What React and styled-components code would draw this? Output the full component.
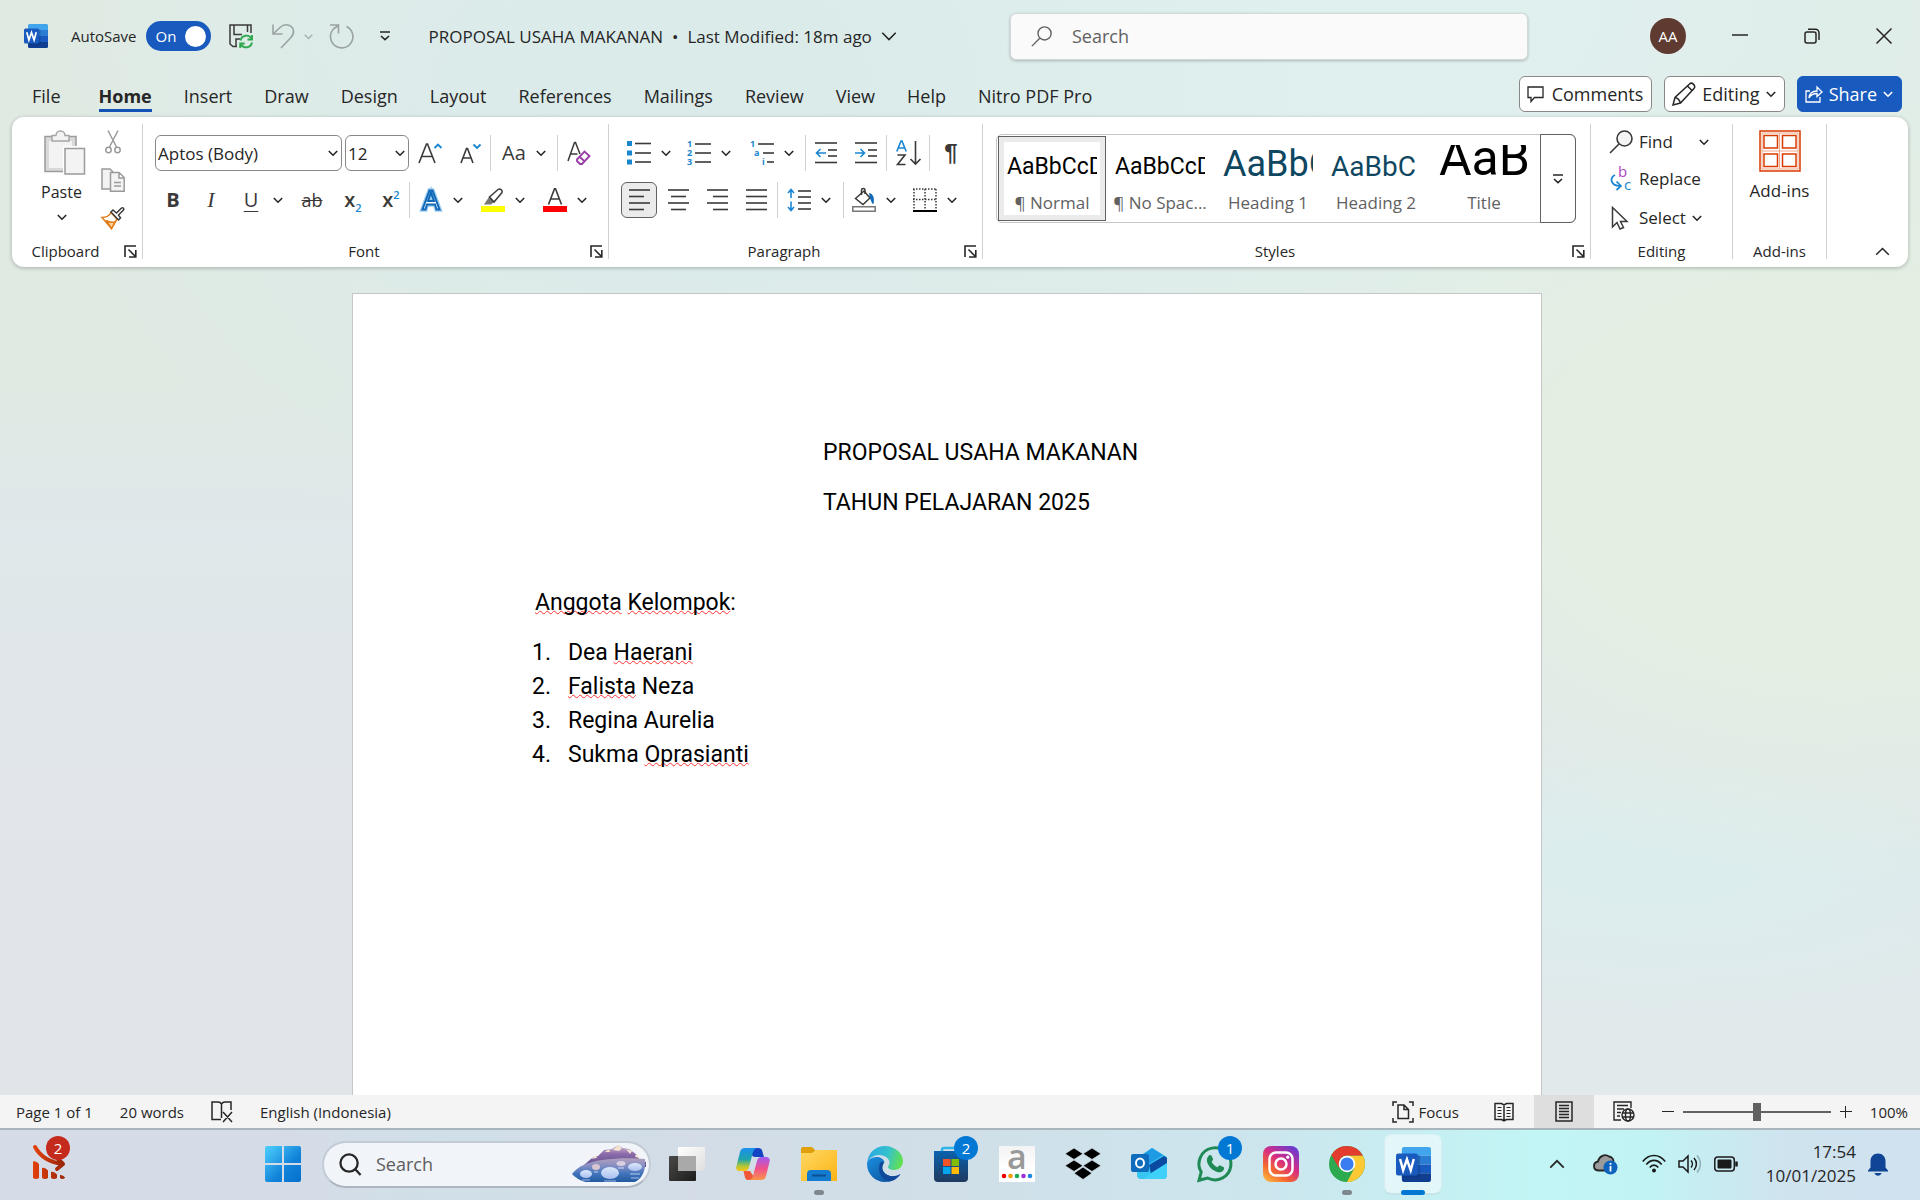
import React from "react";
import styled, { createGlobalStyle, css } from "styled-components";

const ui = '"Open Sans", "Noto Sans", "Liberation Sans", sans-serif';
const body = 'Roboto, "Liberation Sans", sans-serif';
const ink = "#3b3a39";
const blue = "#1a86d0";

const Global = createGlobalStyle`
  *, *::before, *::after { box-sizing: border-box; }
  body { margin: 0; font-family: ${ui}; color: #262626; }
  button, input, select { font: inherit; color: inherit; margin: 0; }
  svg { display: block; flex: none; overflow: visible; }
`;

const Screen = styled.div`
  height: 100vh;
  display: flex;
  flex-direction: column;
  overflow: hidden;
  background:
    radial-gradient(ellipse 32% 34% at 96% 40%, #e4efe3 45%, #e4efe300 100%),
    radial-gradient(ellipse 26% 14% at 86% 72%, #dcedee 20%, #dcedee00 100%),
    radial-gradient(ellipse 40% 26% at 94% 92%, #e1e9eb 50%, #e1e9eb00 100%),
    radial-gradient(ellipse 34% 42% at 36% 8%, #dbebea 20%, #dbebea00 100%),
    radial-gradient(ellipse 60% 40% at 62% 0%, #e0f0ef 30%, #e0f0ef00 100%),
    linear-gradient(180deg, #e0eae2 0%, #e0eae3 32%, #dfe8ea 44%, #e1e6ea 60%, #e1e4e9 100%);
`;

/* ---------- shared bits ---------- */

const PlainButton = styled.button`
  border: 0;
  background: none;
  padding: 0;
  display: flex;
  align-items: center;
  justify-content: center;
`;

const Chevron = ({ size = 10, color = "#262626", up, width = 1.6 }) => (
  <svg width={size} height={size} viewBox="0 0 10 10" fill="none" stroke={color} strokeWidth={width}>
    <path d={up ? "M0.8 7.2 5 3l4.2 4.2" : "M0.8 3 5 7.2 9.2 3"} />
  </svg>
);

const WordLogo = ({ size }) => (
  <svg width={size} height={size} viewBox="0 0 24 24">
    <path d="M5.5 0h17A1.5 1.5 0 0 1 24 1.500V6H4V1.500A1.500 1.500 0 0 1 5.500 0z" fill="#41a5ee" />
    <path d="M4 6h20v6H4z" fill="#2b7cd3" />
    <path d="M4 12h20v6H4z" fill="#185abd" />
    <path d="M4 18h20v4.500a1.500 1.500 0 0 1-1.500 1.500h-17A1.500 1.500 0 0 1 4 22.500z" fill="#103f91" />
    <rect x="4" y="5.500" width="12.500" height="15.500" fill="#0b2f6b" opacity=".3" />
    <rect x="0" y="4.500" width="15" height="15" rx="1.500" fill="#185abd" />
    <path d="M2.800 8.200 4.900 16 7.500 8.500 10.100 16l2.100-7.800" fill="none" stroke="#fff" strokeWidth="1.700" />
  </svg>
);

/* ---------- title bar ---------- */

const TitleBar = styled.header`
  height: 72px;
  flex: none;
  display: flex;
  align-items: center;
  padding-left: 24px;
  font-size: 15px;
`;

const AutoSave = styled.label`
  display: flex;
  align-items: center;
  gap: 9px;
  margin-left: 23px;
  input { position: absolute; opacity: 0; }
`;

const Track = styled.span`
  width: 65px;
  height: 30px;
  border-radius: 15px;
  background: #185abd;
  color: #fff;
  display: flex;
  align-items: center;
  justify-content: space-between;
  padding: 0 5px 0 10px;
  &::after { content: ""; width: 21px; height: 21px; border-radius: 50%; background: #fff; }
`;

const QuickTools = styled.div`
  display: flex;
  align-items: center;
  gap: 16px;
  margin-left: 18px;
`;

const Undo = styled(PlainButton)`
  gap: 9px;
  padding-left: 3px;
`;

const DocTitle = styled(PlainButton)`
  font-size: 17px;
  gap: 9px;
  margin-left: 38px;
  white-space: nowrap;
`;

const TitleSearch = styled.label`
  flex: 0 1 518px;
  height: 47px;
  margin-left: auto;
  display: flex;
  align-items: center;
  gap: 20px;
  padding: 0 20px;
  background: #fafafa;
  border: 1px solid #d2dad9;
  border-radius: 6px;
  box-shadow: 0 1px 3px #0000003d;
  input {
    flex: 1;
    min-width: 0;
    border: 0;
    padding: 0;
    background: none;
    outline: 0;
    font-size: 18px;
    &::placeholder { color: #616161; opacity: 1; }
  }
`;

const Avatar = styled(PlainButton)`
  width: 36px;
  height: 36px;
  border-radius: 50%;
  background: #5f3a30;
  color: #fff;
  font-size: 15px;
  margin: 0 18px 0 122px;
`;

const WindowButton = styled(PlainButton)`
  width: 72px;
  height: 48px;
`;

/* ---------- tab row ---------- */

const TabRow = styled.div`
  height: 45px;
  flex: none;
  display: flex;
  align-items: flex-start;
  padding: 4px 18px 0;
  font-size: 18px;
`;

const Tabs = styled.nav`
  display: flex;
  flex: 1;
`;

const Tab = styled(PlainButton)`
  height: 36px;
  padding: 0 14px;
  margin-right: ${(p) => (p.$first ? 10 : 4)}px;
  font-weight: ${(p) => (p.$active ? 700 : 400)};
  span {
    height: 36px;
    line-height: 40px;
    ${(p) => p.$active && css`box-shadow: inset 0 -3px 0 #1351b4;`}
  }
`;

const TabActions = styled.div`
  display: flex;
  gap: 12px;
`;

const ActionButton = styled.button`
  height: 36px;
  display: flex;
  align-items: center;
  gap: ${(p) => (p.$wide ? 8 : 6)}px;
  padding: 0 8px 0 7px;
  white-space: nowrap;
  border-radius: 6px;
  border: 1px solid ${(p) => (p.$primary ? "#185abd" : "#8a8886")};
  background: ${(p) => (p.$primary ? "#185abd" : "#fff")};
  color: ${(p) => (p.$primary ? "#fff" : "#262626")};
`;

/* ---------- ribbon ---------- */

const Ribbon = styled.section`
  flex: none;
  height: 150px;
  margin: 0 12px;
  padding: 7px 0 8px;
  display: flex;
  background: #fff;
  border-radius: 12px;
  box-shadow: 0 1px 4px #00000045;
`;

const Group = styled.div`
  flex: ${(p) => (p.$grow ? "1 1 0" : `0 0 ${p.$w}px`)};
  min-width: 0;
  display: flex;
  flex-direction: column;
  justify-content: space-between;
  border-right: 1px solid #d1d1d1;
`;

const Footer = styled.div`
  height: 16px;
  line-height: 16px;
  font-size: 15px;
  padding: 0 5px;
  display: flex;
  gap: 10px;
  align-items: center;
  text-align: center;
  white-space: nowrap;
  > span { flex: 1; }
`;

const Launcher = () => (
  <PlainButton aria-label="More options">
    <svg width="13" height="13" viewBox="0 0 13 13" fill="none" stroke="#262626" strokeWidth="1.600">
      <path d="M1 12V1h11M4.500 4.500 11 11M11.800 5v7H5" />
    </svg>
  </PlainButton>
);

const GroupBox = ({ label, launcher, children, ...rest }) => (
  <Group role="group" aria-label={label} {...rest}>
    {children}
    <Footer><span>{label}</span>{launcher && <Launcher />}</Footer>
  </Group>
);

const Rows = styled.div`
  display: flex;
  flex-direction: column;
  gap: 11px;
  padding: 11px 0 0 ${(p) => p.$left}px;
`;

const Row = styled.div`
  height: 36px;
  display: flex;
`;

const AlignTools = styled.div`
  display: flex;
  gap: 3px;
  padding-left: 2px;
`;

const Sep = styled.i`
  width: 1px;
  background: #d1d1d1;
`;

const Tool = styled(PlainButton)`
  width: ${(p) => p.$w || 40}px;
  height: 36px;
  gap: 10px;
  font-size: 18px;
  color: ${ink};
  ${(p) => p.$active && css`
    background: #ebebeb;
    border: 1px solid #616161;
    border-radius: 6px;
  `}
`;

const Picker = styled.label`
  width: ${(p) => p.$w}px;
  height: 36px;
  margin-right: ${(p) => p.$after}px;
  display: grid;
  align-items: center;
  border: 1px solid #8a8886;
  border-radius: 6px;
  background: #fff;
  select, svg { grid-area: 1 / 1; }
  select {
    appearance: none;
    border: 0;
    outline: 0;
    background: none;
    padding: 0 0 0 2px;
    font-size: 17px;
    height: 34px;
  }
  svg { justify-self: end; margin-right: 3px; pointer-events: none; }
`;

const Letter = styled.span`
  min-width: 24px;
  text-align: center;
  white-space: nowrap;
  font-size: ${(p) => p.$size || 20}px;
  line-height: 24px;
  font-weight: ${(p) => p.$weight || 400};
  font-style: ${(p) => p.$style || "normal"};
  font-family: ${(p) => p.$family || ui};
  text-decoration: ${(p) => p.$line || "none"};
  text-decoration-thickness: 1px;
  text-underline-offset: 4px;
  color: ${ink};
  sub, sup { font-size: 11px; line-height: 0; font-weight: 600; color: ${blue}; }
`;

const Clipboard = styled.div`
  display: grid;
  grid-template-columns: 69px 40px;
  padding-left: 12px;
`;

const Paste = styled(PlainButton)`
  flex-direction: column;
  justify-content: flex-start;
  font-size: 16px;
  line-height: 22px;
  padding: 6px 0 0 12px;
  > span { margin: 5px 6px 9px 0; }
  > svg:last-child { margin-right: 6px; }
`;

const SmallStack = styled.div`
  display: flex;
  flex-direction: column;
`;

const SmallTool = styled(PlainButton)`
  height: 39px;
  &:first-child { height: 36px; }
`;

const Gallery = styled.div`
  height: 89px;
  margin: 10px 14px 0 13px;
  display: flex;
  border: 1px solid #c8c6c4;
  border-radius: 6px;
`;

const StyleCards = styled.div`
  flex: 1;
  display: flex;
  overflow: hidden;
  padding: 1px 0 1px 1px;
`;

const StyleCard = styled.button`
  flex: 0 0 108px;
  height: 85px;
  padding: 0;
  background: none;
  border: ${(p) => (p.$active ? "1px solid #616161" : "1px solid transparent")};
  box-shadow: ${(p) => (p.$active ? "inset 0 0 0 5px #ebebeb" : "none")};
  display: flex;
  flex-direction: column;
  align-items: center;
`;

const Sample = styled.span`
  width: 90px;
  height: 38px;
  margin-top: 8px;
  overflow: hidden;
  display: flex;
  align-items: flex-end;
  white-space: nowrap;
  font-family: ${body};
  color: ${(p) => p.$color};
  font-size: ${(p) => p.$size}px;
  line-height: ${(p) => p.$line}px;
`;

const StyleName = styled.span`
  font-size: 17px;
  line-height: 22px;
  margin-top: 9px;
  color: #616161;
  white-space: nowrap;
`;

const GalleryMore = styled(PlainButton)`
  width: 36px;
  margin: -1px;
  border: 1px solid #616161;
  border-radius: 0 6px 6px 0;
`;

const EditList = styled.div`
  display: flex;
  flex-direction: column;
  padding-left: 18px;
`;

const EditTool = styled(PlainButton)`
  height: ${(p) => (p.$first ? 35 : 39)}px;
  justify-content: flex-start;
  gap: 6px;
  font-size: 17px;
  > svg + span { margin-right: ${(p) => (p.$first ? 20 : 0)}px; }
`;

const AddIns = styled(PlainButton)`
  flex-direction: column;
  font-size: 17px;
  line-height: 24px;
  gap: 7px;
  padding-top: 6px;
`;

const RibbonTail = styled.div`
  flex: 0 0 81px;
  display: flex;
  align-items: flex-end;
  justify-content: flex-end;
  padding-right: 18px;
`;

/* ---------- document ---------- */

const Canvas = styled.main`
  flex: 1;
  min-height: 0;
  overflow: hidden;
  display: flex;
  justify-content: center;
  padding: 26px 26px 0 0;
`;

const Page = styled.article`
  flex: 0 1 1190px;
  height: 1684px;
  padding: 142px 144px 0 182px;
  background: #fff;
  border: 1px solid #c6c6c6;
  color: #000;
  font-family: ${body};
  font-size: 23px;
  line-height: 34px;
  p { margin: 0 0 16px; min-height: 34px; }
`;

const Centered = styled.p`
  padding-left: 288px;
`;

const Members = styled.ol`
  list-style: none;
  margin: 0 0 0 -3px;
  padding: 0;
  li { display: flex; }
  li > span { width: 36px; }
`;

const Misspelt = styled.span`
  text-decoration: underline wavy #f33 1px;
  text-decoration-skip-ink: none;
  text-underline-offset: 0;
`;

/* ---------- status bar ---------- */

const StatusBar = styled.footer`
  flex: none;
  height: 33px;
  display: flex;
  align-items: center;
  padding: 0 12px 0 16px;
  background: #f4f4f4;
  font-size: 15px;
  white-space: nowrap;
`;

const StatusInfo = styled.div`
  flex: 1;
  display: flex;
  align-items: center;
  gap: 27px;
`;

const ViewButton = styled(PlainButton)`
  width: 60px;
  height: 33px;
  background: ${(p) => (p.$active ? "#dedede" : "none")};
`;

const FocusButton = styled(PlainButton)`
  gap: 5px;
  margin-right: 15px;
`;

const Zoom = styled.div`
  display: flex;
  align-items: center;
  gap: 9px;
  margin-left: 8px;
`;

const ZoomSlider = styled.input`
  appearance: none;
  width: 148px;
  height: 18px;
  background: linear-gradient(#616161, #616161) center / 100% 2px no-repeat;
  &::-webkit-slider-thumb {
    appearance: none;
    width: 8px;
    height: 18px;
    background: #616161;
  }
`;

const ZoomValue = styled.button`
  border: 0;
  padding: 0;
  margin-left: 18px;
  background: none;
`;

/* ---------- task bar ---------- */

const TaskBar = styled.footer`
  flex: none;
  height: 72px;
  border-top: 2px solid #a9b5bd;
  display: flex;
  align-items: center;
  padding: 0 32px 2px 16px;
  background: linear-gradient(90deg, #d5dbe7 0%, #d5dbe7 14%, #d0dfe8 23%, #d3dce7 36%, #d0dfe8 50%, #cce6ee 66%, #c2f5f5 80%, #c2f3f4 86%, #cfe3ef 93%, #d0e2ef 100%);
`;

const TaskButton = styled(PlainButton)`
  position: relative;
  width: 66px;
  height: 58px;
`;

const Pinned = styled.div`
  display: flex;
  align-items: center;
  margin-left: 168px;
`;

const ActiveTile = styled.span`
  width: 56px;
  height: 58px;
  display: grid;
  place-items: center;
  border-radius: 6px;
  background: #ffffff80;
  box-shadow: 0 0 0 1px #ffffff50, 0 1px 2px #00000020;
`;

const RunMark = styled.i`
  position: absolute;
  left: 50%;
  bottom: -2px;
  width: ${(p) => (p.$active ? 24 : 10)}px;
  height: 5px;
  border-radius: 3px;
  transform: translateX(-50%);
  background: ${(p) => (p.$active ? "#0078d4" : "#7f888f")};
`;

const Badge = styled.span`
  position: absolute;
  left: ${(p) => (p.$red ? 30 : 36)}px;
  top: 1px;
  width: 24px;
  height: 24px;
  border-radius: 50%;
  background: ${(p) => (p.$red ? "#c42b1c" : "#0078d4")};
  color: #fff;
  font-size: 15px;
  line-height: 24px;
  text-align: center;
`;

const TaskSearch = styled.label`
  width: 329px;
  height: 47px;
  margin: 0 3px 0 6px;
  padding: 0 3px 0 15px;
  display: flex;
  align-items: center;
  gap: 14px;
  border: 2px solid #c3cbd6;
  border-bottom-color: #adb6c0;
  border-radius: 24px;
  background: #f1f4f9;
  overflow: hidden;
  input {
    flex: 1;
    min-width: 0;
    border: 0;
    padding: 0;
    outline: 0;
    background: none;
    font-size: 18px;
    &::placeholder { color: #5d5d5d; opacity: 1; }
  }
`;

const Tray = styled.div`
  margin-left: auto;
  display: flex;
  align-items: center;
  gap: 12px;
`;

const Clock = styled.time`
  margin-left: 16px;
  font-size: 17px;
  line-height: 24px;
  text-align: right;
`;

const TrayGap = styled.span`
  display: flex;
  margin-right: ${(p) => p.$w}px;
`;

/* ---------- icons ---------- */

const Lines = ({ rows, w = 24, h = 24, children, color = ink }) => (
  <svg width={w} height={h} viewBox={`0 0 ${w} ${h}`} fill="none" stroke={color} strokeWidth="1.600">
    {rows.map(([x1, x2, y], i) => <path key={i} d={`M${x1} ${y}H${x2}`} />)}
    {children}
  </svg>
);

const SvgText = ({ x, y, size = 9, fill = blue, children, weight = 700 }) => (
  <text x={x} y={y} fontSize={size} fill={fill} stroke="none" fontWeight={weight} fontFamily={ui}>{children}</text>
);

const Magnifier = ({ size, color = ink, fill = "none" }) => (
  <svg width={size} height={size} viewBox="0 0 24 24" fill="none" stroke={color} strokeWidth="1.600">
    <circle cx="15.500" cy="8.500" r="7.500" fill={fill} />
    <path d="M10 14 1 23" />
  </svg>
);

const SaveIcon = () => (
  <svg width="24" height="24" viewBox="0 0 24 24" fill="none" stroke={ink} strokeWidth="1.500">
    <path d="M22 9V1H1v19l3 2.500h4M5 1v9.500h8M18.500 1v7M7 22v-7h4" />
    <g stroke="#2fa84f" strokeWidth="1.900">
      <path d="M11.500 16.500a6 6 0 0 1 11-2M23 11v4.500h-4.500M23 18.500a6 6 0 0 1-11 2M11.200 24v-4.500h4.500" />
    </g>
  </svg>
);

const UndoIcon = () => (
  <svg width="23" height="25" viewBox="0 0 23 25" fill="none" stroke="#9aa3a2" strokeWidth="1.600">
    <path d="M1 .5V10h9.500M1 10 8 3.500C14-2 21 2 21.500 7c.3 3-1 5-3 7L9 24" />
  </svg>
);

const RedoIcon = () => (
  <svg width="25" height="25" viewBox="0 0 25 25" fill="none" stroke="#9aa3a2" strokeWidth="1.600">
    <path d="M1 1h8.500v8.500M9.500 1.500 5 4.500A11.200 11.200 0 1 0 17.500 2.500" />
  </svg>
);

const OverflowIcon = () => (
  <svg width="12" height="12" viewBox="0 0 12 12" fill="none" stroke="#262626" strokeWidth="1.600">
    <path d="M1 2h10M2 6l4 3.600L10 6" />
  </svg>
);

const PasteIcon = () => (
  <svg width="42" height="46" viewBox="0 0 42 46">
    <path d="M1 6.500h31v35H1z" fill="#d9d9d9" stroke="#9b9b9b" strokeWidth="1.500" />
    <path d="M5 11h23v27H5z" fill="#f3f3f3" />
    <path d="M8 11V5.500h4a4.500 4.500 0 0 1 9 0h4V11z" fill="#f3f3f3" stroke="#a6a6a6" strokeWidth="1.500" />
    <path d="M19 16h23v30H19z" fill="#fff" />
    <path d="M21 18.500h19.500v25.500H21z" fill="#f3f3f3" stroke="#9b9b9b" strokeWidth="1.500" />
  </svg>
);

const CutIcon = () => (
  <svg width="16" height="24" viewBox="0 0 16 24" fill="none" stroke="#9b9b9b" strokeWidth="1.500">
    <path d="M3 .5 11.500 17M13 .5 4.500 17" />
    <circle cx="3.500" cy="20" r="2.700" /><circle cx="12.500" cy="20" r="2.700" />
  </svg>
);

const CopyIcon = () => (
  <svg width="24" height="24" viewBox="0 0 24 24" fill="#f3f3f3" stroke="#9b9b9b" strokeWidth="1.500">
    <path d="M9 21H1V1h8l3 3" />
    <path d="M9.500 4.500h8.500l5.200 5V23.200H9.500zM18 4.500V10h5M13 14.500h7M13 18h7" />
  </svg>
);

const PainterIcon = () => (
  <svg width="24" height="23" viewBox="0 0 24 23" fill="none" strokeWidth="1.500">
    <path d="M10 5.500 16 12l-5.500 9.500L1 10.500c4 0 7-1 9-5z" fill="#fff" stroke="#e07b16" />
    <path d="M5 13.500c4 2.500 7 2 9 1.500l-3.500 6.500z" fill="#f9d29d" stroke="#e07b16" />
    <path d="m10 5 2-2 3.500 3 5-5c1.500-1 3 .8 2 2l-5 5 2 3-2 2z" fill="#fff" stroke={ink} />
  </svg>
);

const EraserIcon = () => (
  <svg width="24" height="24" viewBox="0 0 24 24" fill="none" strokeWidth="1.500">
    <path d="M1 20 7.500 1.500h1L13 13M3.500 13h7" stroke={ink} />
    <path d="m10 18.500 7.500-8 5 4.500-7.500 8h-2L10 20z" fill="#fff" stroke="#9b3fa8" strokeWidth="1.900" />
    <path d="m12.500 15.700 5 4.600" stroke="#9b3fa8" strokeWidth="1.900" />
  </svg>
);

const GrowFont = ({ down }) => (
  <svg width="24" height="24" viewBox="0 0 24 24" fill="none" strokeWidth="1.600">
    <path d={down ? "M3 22 8.500 7.500h1L15 22M5 17h8" : "M1 22 8.500 3h1L17 22M4 15.500h10"} stroke={ink} />
    <path d={down ? "M15.500 3.500 19 7l3.500-3.500" : "M16.500 7 20 3.500 23.500 7"} stroke={blue} strokeWidth="1.900" />
  </svg>
);

const EffectA = () => (
  <svg width="24" height="24" viewBox="0 0 24 24">
    <path d="M3.500 21.500h3l1.500-5h8l1.500 5h3L13.500 2.500h-3zM9 13l3-8.500L15 13z" fill="#fff" stroke="#9fcdf0" strokeWidth="4.500" />
    <path d="M3.500 21.500h3l1.500-5h8l1.500 5h3L13.500 2.500h-3zM9 13l3-8.500L15 13z" fill="#fff" stroke="#1068b8" strokeWidth="2" />
  </svg>
);

const HighlightIcon = () => (
  <svg width="24" height="24" viewBox="0 0 24 24" fill="none">
    <path d="M3 16.500 8 9l5 5-3 2.500z" fill="#797775" />
    <path d="M8.500 9 17 1.500c2-1.500 5 1 4 3L13 14z" fill="#fff" stroke={ink} strokeWidth="1.500" />
    <path d="M0 18h24v6H0z" fill="#ff0" />
  </svg>
);

const FontColorIcon = () => (
  <svg width="24" height="24" viewBox="0 0 24 24" fill="none">
    <path d="M5.500 16.500 11.500.8h1l6 15.700M7.800 11h8.400" stroke={ink} strokeWidth="1.600" />
    <path d="M0 18h24v6H0z" fill="red" />
  </svg>
);

const BulletsIcon = () => (
  <Lines rows={[[8, 24, 2.5], [8, 24, 12], [8, 24, 21]]}>
    <path d="M0 0h5v5H0zM0 9.500h5v5H0zM0 18.500h5v5H0z" fill={blue} stroke="none" />
  </Lines>
);

const NumbersIcon = () => (
  <Lines rows={[[8, 24, 3], [8, 24, 12], [8, 24, 21]]}>
    <SvgText x={0} y={6}>1</SvgText><SvgText x={0} y={15}>2</SvgText><SvgText x={0} y={24}>3</SvgText>
  </Lines>
);

const MultiIcon = () => (
  <Lines rows={[[8, 24, 3], [13, 24, 12], [17, 24, 21]]}>
    <SvgText x={0} y={6}>1</SvgText><SvgText x={4} y={15}>a</SvgText><SvgText x={12} y={24}>i</SvgText>
  </Lines>
);

const IndentIcon = ({ out }) => (
  <Lines w={22} rows={[[0, 22, 2], [13, 22, 9], [13, 22, 15], [0, 22, 21.5]]}>
    <path d={out ? "M11 12H1.500M5.500 8 1.500 12l4 4" : "M0 12h9.500M5.500 8l4 4-4 4"} stroke={blue} />
  </Lines>
);

const SortIcon = () => (
  <svg width="25" height="26" viewBox="0 0 25 26" fill="none" stroke={ink} strokeWidth="1.600">
    <path d="M.8 11.500 5 1h1l4.200 10.500M2.500 8h6" stroke={blue} />
    <path d="M1.500 15h7.500L1.500 24.500H9.500M19.500 1v23M14.500 19l5 5 5-5" />
  </svg>
);

const alignRows = {
  left: [[0, 21, 2], [0, 15, 8.5], [0, 21, 15], [0, 15, 21.5]],
  center: [[0, 21, 2], [3, 18, 8.5], [0, 21, 15], [3, 18, 21.5]],
  right: [[0, 21, 2], [6, 21, 8.5], [0, 21, 15], [6, 21, 21.5]],
  justify: [[0, 21, 2], [0, 21, 8.5], [0, 21, 15], [0, 21, 21.5]],
};

const SpacingIcon = () => (
  <Lines rows={[[11, 24, 3], [11, 24, 9], [11, 24, 15], [11, 24, 21]]}>
    <path d="M4 1.500V10M1 5l3-3.500L7 5M4 13.500v9M1 19l3 3.500L7 19" stroke={blue} />
  </Lines>
);

const BucketIcon = () => (
  <svg width="24" height="24" viewBox="0 0 24 24" fill="none" stroke={ink} strokeWidth="1.500">
    <path d="M3.500 10.500 12 3l6 7-7 6.500z" fill="#fff" />
    <path d="M9.500 7V2c0-2 3.500-2 3.500 0v4" />
    <path d="M18 6c3 1 3.500 4 3 9.500l-2.500-6z" fill="#1068b8" stroke="#1068b8" />
    <path d="M.8 18.800h22.400v4.400H.8z" stroke="#797775" />
  </svg>
);

const BordersIcon = () => (
  <svg width="24" height="24" viewBox="0 0 24 24" fill="none" stroke={ink} strokeWidth="1.500">
    <path d="M0 1h24M1 1v20M23 1v20M12 1v20M0 11.500h24" strokeDasharray="1.500 1.500" />
    <path d="M0 23h24" stroke="#000" strokeWidth="2" />
  </svg>
);

const ReplaceIcon = () => (
  <svg width="24" height="25" viewBox="0 0 24 25" fill="none" stroke={blue} strokeWidth="1.700">
    <path d="M6 9C0 12 2 20 11 20M7.500 15.500l4.500 4.500-4.500 4" />
    <SvgText x={9} y={11} size={15} fill="#b146c2" weight={400}>b</SvgText>
    <SvgText x={15} y={24} size={15} weight={400}>c</SvgText>
  </svg>
);

const CursorIcon = () => (
  <svg width="24" height="24" viewBox="0 0 24 24" fill="#fff" stroke={ink} strokeWidth="1.500">
    <path d="M3.500 1.500V21l4.500-4.500 3 6.500 3.500-1.500-3-6h6.500z" />
  </svg>
);

const AddInsIcon = () => (
  <svg width="42" height="42" viewBox="0 0 42 42" fill="none" stroke="#d83b01" strokeWidth="1.500">
    <path d="M1 1h40v40H1z" />
    <path d="M3 3h36v36H3zM20.500 3v36M3 21h36" stroke="#f0a58a" strokeWidth="1" />
    <path d="M5 5.500h13.500V18H5zM23.500 5.500H37V18H23.500zM5 24h13.500v12.500H5zM23.500 24H37v12.500H23.500z" />
  </svg>
);

const CommentIcon = () => (
  <svg width="17" height="17" viewBox="0 0 17 17" fill="none" stroke="#262626" strokeWidth="1.300">
    <path d="M1 1h15v10.500H7.500L4 15.500v-4H1z" />
  </svg>
);

const PencilIcon = () => (
  <svg width="24" height="24" viewBox="0 0 24 24" fill="none" stroke="#262626" strokeWidth="1.500">
    <path d="M1 23l2-7.500L17.500 2c2.500-2.500 7 2 4.500 4.500L8.500 21zM15.500 4l5 5M3 15.500c3 .5 4.500 2.500 5.500 5.500" />
  </svg>
);

const ShareIcon = () => (
  <svg width="18" height="18" viewBox="0 0 18 18" fill="none" stroke="#fff" strokeWidth="1.300">
    <path d="M5 6H1v11h14v-5M4 13c.5-5 3.500-7 8-7V2l5 5-5 4.500V8.500C8 8.500 6 9.500 4 13z" />
  </svg>
);

const ProofIcon = () => (
  <svg width="22" height="22" viewBox="0 0 22 22" fill="none" stroke="#262626" strokeWidth="1.500">
    <path d="M10 18.500H1V1h6c2 0 3 1 3.500 2C11 2 12 1 14 1h6v8M10.500 3v14M12 11l9 10M21 11l-9 10" />
  </svg>
);

const FocusIcon = () => (
  <svg width="22" height="22" viewBox="0 0 22 22" fill="none" stroke="#262626" strokeWidth="1.500">
    <path d="M1 5V1h4M17 1h4v4M1 17v4h4M17 21h4v-4M6 4h6l4.500 4.500V17.500H6zM12 4v4.500h4.500" />
  </svg>
);

const ReadIcon = () => (
  <svg width="20" height="20" viewBox="0 0 20 20" fill="none" stroke="#262626" strokeWidth="1.500">
    <path d="M1 1.500h6.500L10 3l2.500-1.500H19v16h-6.500L10 19l-2.500-1.500H1zM10 3v15" />
    <path d="M3.500 5.500h4M3.500 8.500h4M3.500 11.500h4M3.500 14.500h4M12.500 5.500h4M12.500 8.500h4M12.500 11.500h4M12.500 14.500h4" strokeWidth="1.200" />
  </svg>
);

const PrintIcon = () => (
  <svg width="18" height="21" viewBox="0 0 18 21" fill="none" stroke="#262626" strokeWidth="1.500">
    <path d="M1 1h16v19H1z" />
    <path d="M4 4.500h10M4 7.500h10M4 10.500h10M4 13.500h10M4 16.500h10" />
  </svg>
);

const WebIcon = () => (
  <svg width="22" height="21" viewBox="0 0 22 21" fill="none" stroke="#262626" strokeWidth="1.400">
    <path d="M8 19H1V1h17v6M4 4.500h11M4 8h7M4 11.500h4M4 15h3" />
    <circle cx="15" cy="14" r="6" /><ellipse cx="15" cy="14" rx="2.500" ry="6" /><path d="M9.500 12h11M9.500 16h11" />
  </svg>
);

const StocksIcon = () => (
  <svg width="34" height="41" viewBox="0 0 34 41">
    <defs><linearGradient id="stk" x1="0" y1="0" x2="1" y2="0"><stop offset="0" stopColor="#e2400a" /><stop offset="1" stopColor="#9a2608" /></linearGradient></defs>
    <path d="M3 3c5 9 13 15 27 17M26 15l5 5-6 5" fill="none" stroke="url(#stk)" strokeWidth="4" strokeLinecap="round" strokeLinejoin="round" />
    <path d="M1 17.500q3-1 6 2.500V34q-3 2-6 0zM10 24q3-1 6 2.500V34q-3 2-6 0zM19 28q3-1 6 2.500V34q-3 2-6 0zM28 31q3-.5 5 2.500v.5q-3 2-5 0z" fill="url(#stk)" />
  </svg>
);

const StartIcon = () => (
  <svg width="36" height="36" viewBox="0 0 36 36">
    <defs><linearGradient id="win" x1="0" y1="0" x2="1" y2="1"><stop offset="0" stopColor="#4fd0ff" /><stop offset=".6" stopColor="#1183d8" /><stop offset="1" stopColor="#0570cf" /></linearGradient></defs>
    <path d="M2 0h15v17H0V2a2 2 0 0 1 2-2zM19 0h15a2 2 0 0 1 2 2v15H19zM0 19h17v17H2a2 2 0 0 1-2-2zM19 19h17v15a2 2 0 0 1-2 2H19z" fill="url(#win)" />
  </svg>
);

const SearchGlass = () => (
  <svg width="23" height="23" viewBox="0 0 24 24" fill="none" stroke="#262626" strokeWidth="2.400">
    <circle cx="10.500" cy="10.500" r="9" /><path d="m16.500 16.500 6 6.500" />
  </svg>
);

const ReefIcon = () => (
  <svg width="74" height="38" viewBox="0 0 74 38">
    <defs>
      <linearGradient id="hill" x1="0" y1="0" x2="0" y2="1"><stop offset="0" stopColor="#d9c3cf" /><stop offset=".4" stopColor="#8c6bab" /><stop offset="1" stopColor="#5a4a86" /></linearGradient>
      <linearGradient id="sea" x1="0" y1="0" x2="0" y2="1"><stop offset="0" stopColor="#b3a0bd" /><stop offset=".35" stopColor="#7f8cc4" /><stop offset=".65" stopColor="#3f74bb" /><stop offset="1" stopColor="#245a9f" /></linearGradient>
      <linearGradient id="jelly" x1="0" y1="0" x2="0" y2="1"><stop offset="0" stopColor="#dce9fb" /><stop offset="1" stopColor="#a9bff0" /></linearGradient>
    </defs>
    <path d="m12 20 8-7 6-2 6-6 8-1 6-4 5 3 6 1 7 5 3 5 7 3v5H12z" fill="url(#hill)" />
    <path d="M0 29c6-8 16-12 30-14s32-2 43-1c1 10-2 19-10 23H14C8 36 3 32 0 29z" fill="url(#sea)" />
    <path d="m41 5 5-5 4 3-3 3zM33 7l4-3 1 3zM54 4l6 2-2 3zM19 14l5-3 1 2zM64 9l4 4-5-1z" fill="#f4e2cf" />
    <g fill="url(#jelly)">
      <ellipse cx="14" cy="29" rx="6" ry="4" /><ellipse cx="38" cy="28" rx="9" ry="6" /><ellipse cx="63" cy="22" rx="7" ry="4" />
      <ellipse cx="24" cy="22" rx="4" ry="3" fill="#d9c5d0" /><ellipse cx="49" cy="18.500" rx="4.500" ry="2.500" fill="#d9cfe0" />
      <path d="M10 34h8v2h-8zM32 35h12v2H32zM58 28h10v2H58zM59 32h8v2h-8zM22 26h4v2h-4zM46 22h6v2h-6z" opacity=".45" />
    </g>
  </svg>
);

const TaskViewIcon = () => (
  <svg width="36" height="34" viewBox="0 0 36 34">
    <defs>
      <linearGradient id="tvd" x1="0" y1="0" x2="1" y2="1"><stop offset="0" stopColor="#4a4947" /><stop offset="1" stopColor="#1d1d1d" /></linearGradient>
      <linearGradient id="tvw" x1="0" y1="0" x2="1" y2="1"><stop offset="0" stopColor="#fff" /><stop offset="1" stopColor="#dedede" /></linearGradient>
    </defs>
    <rect x="0" y="9" width="27" height="25" rx="1" fill="url(#tvd)" />
    <rect x="9" y="0" width="27" height="24" rx="1" fill="url(#tvw)" />
    <path d="M9 9h18v15H9z" fill="#a9a9a9" />
  </svg>
);

const CopilotIcon = () => (
  <svg width="34" height="32" viewBox="0 0 34 32">
    <defs>
      <linearGradient id="cpa" x1="0" y1="0" x2="0" y2="1"><stop offset="0" stopColor="#1a8ff0" /><stop offset=".5" stopColor="#20a5a8" /><stop offset=".8" stopColor="#b8c832" /><stop offset="1" stopColor="#f5c518" /></linearGradient>
      <linearGradient id="cpb" x1="0" y1="0" x2="0" y2="1"><stop offset="0" stopColor="#a05af0" /><stop offset=".5" stopColor="#f0508c" /><stop offset="1" stopColor="#fa9648" /></linearGradient>
    </defs>
    <path d="M14 0h8c3 0 4 1 4.500 4l1.500 5h-9c-3 0-4-3-5-9z" fill="#1443c4" />
    <path d="M20 32h-8c-3 0-3-3-4.500-9H14z" fill="#f0583a" />
    <path d="M9 0h12c-3.500 1-4 4-5 8l-3 11c-.8 3-2 4-5 4H4c-3 0-4.500-2-3.500-5L4 4c1-3 2-4 5-4z" fill="url(#cpa)" />
    <path d="M25 32H13c3.500-1 4-4 5-8l3-11c.8-3 2-4 5-4h4c3 0 4.500 2 3.500 5L30 28c-1 3-2 4-5 4z" fill="url(#cpb)" />
  </svg>
);

const FolderIcon = () => (
  <svg width="36" height="34" viewBox="0 0 36 34">
    <defs><linearGradient id="fld" x1="0" y1="0" x2="1" y2="1"><stop offset="0" stopColor="#ffd863" /><stop offset="1" stopColor="#fbb416" /></linearGradient></defs>
    <path d="M0 8V2a2 2 0 0 1 2-2h9l4 4v4z" fill="#dfa00c" />
    <path d="M0 6h11l4-3h21v31H0z" fill="url(#fld)" />
    <path d="M6 34v-7a4 4 0 0 1 4-4h16a4 4 0 0 1 4 4v7z" fill="#137bd0" />
    <path d="M11 28.500h14" stroke="#0a4f8f" strokeWidth="2" />
  </svg>
);

const EdgeIcon = () => (
  <svg width="36" height="36" viewBox="0 0 36 36">
    <defs>
      <linearGradient id="ega" x1="0" y1=".3" x2="1" y2=".5"><stop offset="0" stopColor="#29a8e0" /><stop offset=".55" stopColor="#35c1cf" /><stop offset="1" stopColor="#62e14c" /></linearGradient>
      <linearGradient id="egb" x1="0" y1="0" x2="1" y2="1"><stop offset="0" stopColor="#1a8fe0" /><stop offset="1" stopColor="#0c4a94" /></linearGradient>
    </defs>
    <path d="M0 17C1 7 8.500 0 18 0s18 7 18 15c0 6-4.500 9-9 9-4 0-6-1.500-6-3 0-1 1.500-2 1.500-4.500C22.500 12 17 9 12 9 6 9 1 13 0 17z" fill="url(#ega)" />
    <path d="M0 18c0 10 8 18 18 18 7 0 12-3 15.500-8-4 2.500-9 3-13 1-5-2.500-7-8-3-13-1-3-4-5-8-5-5 0-9.500 3-9.500 7z" fill="url(#egb)" />
    <path d="M13 17c-3 8 1 16 9 18.500 5-.8 9-3.500 11.500-7.500-4 2.500-9 3-13 1-5-2.500-7-7-3.500-12.500-1.500-1-3-.8-4 .5z" fill="#10499a" />
  </svg>
);

const StoreIcon = () => (
  <svg width="36" height="36" viewBox="0 0 36 36">
    <defs><linearGradient id="sto" x1="0" y1="0" x2="0" y2="1"><stop offset="0" stopColor="#0a62ae" /><stop offset="1" stopColor="#1f3a5f" /></linearGradient></defs>
    <path d="M9 8V4a2 2 0 0 1 2-2h14a2 2 0 0 1 2 2v4" fill="none" stroke="#2fb4ec" strokeWidth="2.500" />
    <path d="M1 5h34v27a4 4 0 0 1-4 4H5a4 4 0 0 1-4-4z" fill="url(#sto)" />
    <path d="M10 13h7.500v7H10z" fill="#f35325" /><path d="M18.500 13H26v7h-7.500z" fill="#81bc06" />
    <path d="M10 21h7.500v7H10z" fill="#05a6f0" /><path d="M18.500 21H26v7h-7.500z" fill="#ffba08" />
  </svg>
);

const AlexaTile = () => (
  <svg width="36" height="36" viewBox="0 0 36 36">
    <defs><linearGradient id="atl" x1="0" y1="0" x2="0" y2="1"><stop offset="0" stopColor="#f3f3f3" /><stop offset=".6" stopColor="#fff" /></linearGradient></defs>
    <path d="M0 0h36v36H0z" fill="url(#atl)" />
    <text x="8" y="23" fontSize="34" fontFamily={ui} fontWeight="600" fill="#999">a</text>
    {["#e00", "#f59b00", "#1faa59", "#9b30d9", "#1a86e0"].map((c, i) => <circle key={c} cx={5 + i * 6.5} cy="30" r="2.300" fill={c} />)}
  </svg>
);

const DropboxIcon = () => (
  <svg width="36" height="32" viewBox="0 0 36 32" fill="#000">
    <path d="M9 0 18 5.800 9 11.500 0 5.800zM27 0l9 5.800-9 5.700-9-5.700zM9 12l9 5.700L9 23.500 0 17.700zM27 12l9 5.700-9 5.800-9-5.800zM18 19l9 6.200-9 6.300-9-6.300z" stroke="#d1dde7" strokeWidth=".8" />
  </svg>
);

const OutlookIcon = () => (
  <svg width="36" height="32" viewBox="0 0 36 32">
    <path d="M6 10 21 0l15 9v18a4 4 0 0 1-4 4H10a4 4 0 0 1-4-4z" fill="#37c5f2" />
    <path d="M8 9 21 0l11 7-14 9z" fill="#1f9be6" />
    <path d="m18 17 15-9 3 2v6L20 26z" fill="#0a4aa0" />
    <path d="m20 25 16-10v12a4 4 0 0 1-4 4H12z" fill="#3fd0fa" />
    <rect x="0" y="6" width="18" height="18" rx="2" fill="#0f6cbd" />
    <ellipse cx="9" cy="15" rx="4" ry="4.500" fill="none" stroke="#fff" strokeWidth="2" />
  </svg>
);

const WhatsAppIcon = () => (
  <svg width="36" height="36" viewBox="0 0 36 36">
    <path d="M2 34.300 4.200 26A16 16 0 1 1 10.500 32z" fill="none" stroke="#1f8a55" strokeWidth="3" />
    <path d="M12 9.500c1-.8 2.200-.5 2.700.6l1.300 3c.3.8-.8 2-1.300 2.600.9 2.300 3.500 4.700 6 5.600.7-.8 1.500-2.300 2.500-1.900l3.200 1.600c1 .6.700 2 .2 3-1.200 2-4 2.800-6.400 2-5-1.600-9-5.600-10.200-10.500-.5-2.300.3-4.600 2-6z" fill="#1f8a55" />
  </svg>
);

const InstagramIcon = () => (
  <svg width="36" height="36" viewBox="0 0 36 36">
    <defs><linearGradient id="ig" x1=".1" y1="1" x2=".8" y2="0"><stop offset="0" stopColor="#fdb73e" /><stop offset=".3" stopColor="#f4652f" /><stop offset=".6" stopColor="#d62d84" /><stop offset="1" stopColor="#6a3bd0" /></linearGradient></defs>
    <rect width="36" height="36" rx="8" fill="url(#ig)" />
    <g fill="none" stroke="#fff" strokeWidth="2.500"><rect x="6.500" y="6.500" width="23" height="23" rx="6.500" /><circle cx="18" cy="18" r="5.500" /></g>
    <circle cx="24.800" cy="11.200" r="1.600" fill="#fff" />
  </svg>
);

const ChromeIcon = () => (
  <svg width="36" height="36" viewBox="0 0 36 36">
    <circle cx="18" cy="18" r="18" fill="#2da94f" />
    <path d="M18 9.500H33.800A18 18 0 0 1 18 36l7.400-13.800z" fill="#fcc934" />
    <path d="M2.400 9A18 18 0 0 1 33.800 9.500H18a8.500 8.500 0 0 0-8 6.500v6z" fill="#e33b2e" />
    <circle cx="18" cy="18" r="8.300" fill="#fff" /><circle cx="18" cy="18" r="6.600" fill="#3a7df0" />
  </svg>
);

const CloudIcon = () => (
  <svg width="25" height="22" viewBox="0 0 25 22">
    <path d="M6 17.500c-6.500 0-6.500-8-1-9C6 3 12 .500 16 3.500c3 .2 5 3 4.500 6l-3 8z" fill="#9b9b9b" stroke="#262626" strokeWidth="1.800" />
    <circle cx="17.500" cy="14.500" r="7" fill="#0f63bd" /><path d="M17.500 13v5.500M17.500 10v1.800" stroke="#fff" strokeWidth="1.800" />
  </svg>
);

const WifiIcon = () => (
  <svg width="24" height="20" viewBox="0 0 24 20" fill="none" stroke="#1a1a1a" strokeWidth="1.600">
    <path d="M.8 7.500C7-.500 17-.500 23.200 7.500M4.300 10.500c4.500-5.500 11-5.500 15.400 0M7.700 13.500c2.500-3.200 6-3.200 8.600 0" />
    <circle cx="12" cy="16.500" r="2" fill="#1a1a1a" stroke="none" />
  </svg>
);

const SpeakerIcon = () => (
  <svg width="24" height="20" viewBox="0 0 24 20" fill="none" stroke="#1a1a1a" strokeWidth="1.500">
    <path d="M1 7v6h4l5 5V2L5 7zM13 6.500c1.800 2 1.800 5 0 7M16 4c3.200 3.500 3.200 8.500 0 12" />
    <path d="M19 1.500c4.500 5 4.500 12 0 17" stroke="#8fb3b6" />
  </svg>
);

const BatteryIcon = () => (
  <svg width="24" height="16" viewBox="0 0 24 16" fill="none" stroke="#1a1a1a" strokeWidth="1.500">
    <rect x=".8" y="1" width="19.500" height="14" rx="3" /><rect x="3.500" y="3.500" width="14" height="9" rx="1" fill="#1a1a1a" stroke="none" />
    <path d="M22.500 5.500v5" strokeWidth="2.500" />
  </svg>
);

const BellIcon = () => (
  <svg width="20" height="23" viewBox="0 0 20 23" fill="#0f4594">
    <path d="M2.500 8c0-4 3-7.500 7.500-7.500S17.500 4 17.500 8v6.500l2.500 3v1H0v-1l2.500-3zM6.500 20h7c-1 3.500-6 3.500-7 0z" />
  </svg>
);

/* ---------- data ---------- */

const tabs = ["File", "Home", "Insert", "Draw", "Design", "Layout", "References", "Mailings", "Review", "View", "Help", "Nitro PDF Pro"];

const styleCards = [
  { name: "¶ Normal", text: "AaBbCcD", size: 23, line: 33, color: "#000", active: true },
  { name: "¶ No Spac...", text: "AaBbCcD", size: 23, line: 33, color: "#000" },
  { name: "Heading 1", text: "AaBbC", size: 36, line: 38, color: "#0f4761" },
  { name: "Heading 2", text: "AaBbC", size: 28, line: 33, color: "#0f4761" },
  { name: "Title", text: "AaB", size: 50, line: 50, color: "#000" },
];

const pinned = [
  { name: "Task view", icon: <TaskViewIcon /> },
  { name: "Copilot", icon: <CopilotIcon /> },
  { name: "File Explorer", icon: <FolderIcon />, running: true },
  { name: "Edge", icon: <EdgeIcon /> },
  { name: "Store", icon: <StoreIcon />, badge: 2 },
  { name: "Alexa", icon: <AlexaTile /> },
  { name: "Dropbox", icon: <DropboxIcon /> },
  { name: "Outlook", icon: <OutlookIcon /> },
  { name: "WhatsApp", icon: <WhatsAppIcon />, badge: 1 },
  { name: "Instagram", icon: <InstagramIcon /> },
  { name: "Chrome", icon: <ChromeIcon />, running: true },
  { name: "Word", icon: <ActiveTile><WordLogo size={35} /></ActiveTile>, running: true, active: true },
];

const Split = ({ w = 60, label, children }) => (
  <Tool $w={w} aria-label={label}>{children}<Chevron /></Tool>
);

/* ---------- sections ---------- */

const Header = () => (
  <TitleBar>
    <WordLogo size={24} />
    <AutoSave>AutoSave<input type="checkbox" defaultChecked /><Track>On</Track></AutoSave>
    <QuickTools>
      <PlainButton aria-label="Save"><SaveIcon /></PlainButton>
      <Undo aria-label="Undo"><UndoIcon /><Chevron size={9} color="#a9b0b0" /></Undo>
      <PlainButton aria-label="Redo"><RedoIcon /></PlainButton>
    </QuickTools>
    <TrayGap $w={25} />
    <PlainButton aria-label="Customize toolbar"><OverflowIcon /></PlainButton>
    <DocTitle><span>PROPOSAL USAHA MAKANAN</span><span>•</span><span>Last Modified: 18m ago</span><Chevron size={16} width={1} /></DocTitle>
    <TitleSearch><Magnifier size={21} color="#616161" /><input type="text" placeholder="Search" aria-label="Search" /></TitleSearch>
    <Avatar aria-label="Account">AA</Avatar>
    <WindowButton aria-label="Minimize"><svg width="16" height="16" viewBox="0 0 16 16" stroke="#262626" strokeWidth="1.500"><path d="M0 7h16" /></svg></WindowButton>
    <WindowButton aria-label="Restore">
      <svg width="16" height="16" viewBox="0 0 16 16" fill="none" stroke="#262626" strokeWidth="1.500"><rect x="1" y="4" width="11" height="11" rx="2" /><path d="M4 1.200h7.500a3.500 3.500 0 0 1 3.500 3.500V12" /></svg>
    </WindowButton>
    <WindowButton aria-label="Close"><svg width="16" height="16" viewBox="0 0 16 16" stroke="#262626" strokeWidth="1.500"><path d="m.5.5 15 15M15.500.5l-15 15" /></svg></WindowButton>
  </TitleBar>
);

const TabStrip = () => (
  <TabRow>
    <Tabs>{tabs.map((t, i) => <Tab key={t} $first={i === 0} $active={t === "Home"}><span>{t}</span></Tab>)}</Tabs>
    <TabActions>
      <ActionButton $wide><CommentIcon />Comments</ActionButton>
      <ActionButton><PencilIcon />Editing<Chevron /></ActionButton>
      <ActionButton $primary><ShareIcon />Share<Chevron color="#fff" /></ActionButton>
    </TabActions>
  </TabRow>
);

const FontGroup = () => (
  <GroupBox label="Font" launcher $w={466}>
    <Rows $left={12}>
      <Row>
        <Picker $w={187} $after={3}>
          <select aria-label="Font"><option>Aptos (Body)</option></select><Chevron />
        </Picker>
        <Picker $w={64} $after={1}>
          <select aria-label="Font size"><option>12</option></select><Chevron />
        </Picker>
        <Tool aria-label="Grow font"><GrowFont /></Tool>
        <Tool aria-label="Shrink font"><GrowFont down /></Tool>
        <Sep />
        <Tool $w={66}><Letter>Aa</Letter><Chevron /></Tool>
        <Sep />
        <Tool $w={42} aria-label="Clear formatting"><EraserIcon /></Tool>
      </Row>
      <Row>
        <Tool $w={36}><Letter $weight={700}>B</Letter></Tool>
        <Tool><Letter $style="italic" $family='"Liberation Serif", serif' $size={22}>I</Letter></Tool>
        <Split label="Underline"><Letter $line="underline">U</Letter></Split>
        <Tool $w={42}><Letter $line="line-through" $size={18}>ab</Letter></Tool>
        <Tool><Letter $weight={600}>x<sub>2</sub></Letter></Tool>
        <Tool $w={36}><Letter $weight={600}>x<sup>2</sup></Letter></Tool>
        <Sep />
        <Split w={62} label="Text effects"><EffectA /></Split>
        <Split w={62} label="Highlight"><HighlightIcon /></Split>
        <Split w={62} label="Font color"><FontColorIcon /></Split>
      </Row>
    </Rows>
  </GroupBox>
);

const ParagraphGroup = () => (
  <GroupBox label="Paragraph" launcher $w={374}>
    <Rows $left={10}>
      <Row>
        <Split label="Bullets"><BulletsIcon /></Split>
        <Split label="Numbering"><NumbersIcon /></Split>
        <Split w={66} label="Multilevel list"><MultiIcon /></Split>
        <Sep />
        <Tool aria-label="Decrease indent"><IndentIcon out /></Tool>
        <Tool aria-label="Increase indent"><IndentIcon /></Tool>
        <Sep />
        <Tool $w={42} aria-label="Sort"><SortIcon /></Tool>
        <Sep />
        <Tool $w={42} aria-label="Show marks"><Letter $size={24} $weight={700} $family='"Liberation Sans", sans-serif'>¶</Letter></Tool>
      </Row>
      <Row>
        <AlignTools>
          {Object.keys(alignRows).map((k) => (
            <Tool key={k} $w={36} $active={k === "left"} aria-label={`Align ${k}`}><Lines w={21} rows={alignRows[k]} /></Tool>
          ))}
          <Sep />
        </AlignTools>
        <Split w={62} label="Line spacing"><SpacingIcon /></Split>
        <TrayGap $w={3} />
        <Sep />
        <Split label="Shading"><BucketIcon /></Split>
        <Split w={62} label="Borders"><BordersIcon /></Split>
      </Row>
    </Rows>
  </GroupBox>
);

const RibbonBar = () => (
  <Ribbon>
    <GroupBox label="Clipboard" launcher $w={131}>
      <Clipboard>
        <Paste><PasteIcon /><span>Paste</span><Chevron /></Paste>
        <SmallStack>
          <SmallTool aria-label="Cut"><CutIcon /></SmallTool>
          <SmallTool aria-label="Copy"><CopyIcon /></SmallTool>
          <SmallTool aria-label="Format painter"><PainterIcon /></SmallTool>
        </SmallStack>
      </Clipboard>
    </GroupBox>
    <FontGroup />
    <ParagraphGroup />
    <GroupBox label="Styles" launcher $grow>
      <Gallery>
        <StyleCards>
          {styleCards.map((s) => (
            <StyleCard key={s.name} $active={s.active}>
              <Sample $size={s.size} $line={s.line} $color={s.color}>{s.text}</Sample>
              <StyleName>{s.name}</StyleName>
            </StyleCard>
          ))}
        </StyleCards>
        <GalleryMore aria-label="More styles"><OverflowIcon /></GalleryMore>
      </Gallery>
    </GroupBox>
    <GroupBox label="Editing" $w={142}>
      <EditList>
        <EditTool $first><Magnifier size={24} fill="#f5f5f5" /><span>Find</span><Chevron /></EditTool>
        <EditTool><ReplaceIcon /><span>Replace</span></EditTool>
        <EditTool><CursorIcon /><span>Select</span><Chevron /></EditTool>
      </EditList>
    </GroupBox>
    <GroupBox label="Add-ins" $w={94}>
      <AddIns><AddInsIcon /><span>Add-ins</span></AddIns>
    </GroupBox>
    <RibbonTail><PlainButton aria-label="Collapse ribbon"><Chevron size={15} up width={1} /></PlainButton></RibbonTail>
  </Ribbon>
);

const Document = () => (
  <Canvas>
    <Page>
      <Centered>PROPOSAL USAHA MAKANAN</Centered>
      <Centered>TAHUN PELAJARAN 2025</Centered>
      <p />
      <p><Misspelt>Anggota</Misspelt> <Misspelt>Kelompok</Misspelt>:</p>
      <Members>
        <li><span>1.</span><div>Dea <Misspelt>Haerani</Misspelt></div></li>
        <li><span>2.</span><div><Misspelt>Falista</Misspelt> Neza</div></li>
        <li><span>3.</span><div>Regina Aurelia</div></li>
        <li><span>4.</span><div>Sukma <Misspelt>Oprasianti</Misspelt></div></li>
      </Members>
    </Page>
  </Canvas>
);

const Status = () => (
  <StatusBar>
    <StatusInfo>
      <span>Page 1 of 1</span><span>20 words</span>
      <PlainButton aria-label="Proofing"><ProofIcon /></PlainButton>
      <span>English (Indonesia)</span>
    </StatusInfo>
    <FocusButton><FocusIcon />Focus</FocusButton>
    <ViewButton aria-label="Read mode"><ReadIcon /></ViewButton>
    <ViewButton $active aria-label="Print layout"><PrintIcon /></ViewButton>
    <ViewButton aria-label="Web layout"><WebIcon /></ViewButton>
    <Zoom>
      <PlainButton aria-label="Zoom out"><svg width="12" height="12" viewBox="0 0 12 12" stroke="#262626"><path d="M0 5.500h12" /></svg></PlainButton>
      <ZoomSlider type="range" min="0" max="100" defaultValue="50" aria-label="Zoom" />
      <PlainButton aria-label="Zoom in"><svg width="12" height="12" viewBox="0 0 12 12" stroke="#262626"><path d="M0 5.500h12M5.500 0v12" /></svg></PlainButton>
    </Zoom>
    <ZoomValue>100%</ZoomValue>
  </StatusBar>
);

const Dock = () => (
  <TaskBar>
    <TaskButton aria-label="Widgets"><StocksIcon /><Badge $red>2</Badge></TaskButton>
    <Pinned>
      <TaskButton aria-label="Start"><StartIcon /></TaskButton>
      <TaskSearch><SearchGlass /><input type="text" placeholder="Search" aria-label="Search Windows" /><ReefIcon /></TaskSearch>
      {pinned.map((p) => (
        <TaskButton key={p.name} aria-label={p.name}>
          {p.icon}
          {p.badge && <Badge>{p.badge}</Badge>}
          {p.running && <RunMark $active={p.active} />}
        </TaskButton>
      ))}
    </Pinned>
    <Tray>
      <TrayGap $w={16}><Chevron size={16} up width={1.1} /></TrayGap>
      <TrayGap $w={12}><CloudIcon /></TrayGap>
      <WifiIcon /><SpeakerIcon /><BatteryIcon />
      <Clock>17:54<br />10/01/2025</Clock>
      <BellIcon />
    </Tray>
  </TaskBar>
);

export default function App() {
  return (
    <>
      <Global />
      <Screen>
        <Header />
        <TabStrip />
        <RibbonBar />
        <Document />
        <Status />
        <Dock />
      </Screen>
    </>
  );
}
